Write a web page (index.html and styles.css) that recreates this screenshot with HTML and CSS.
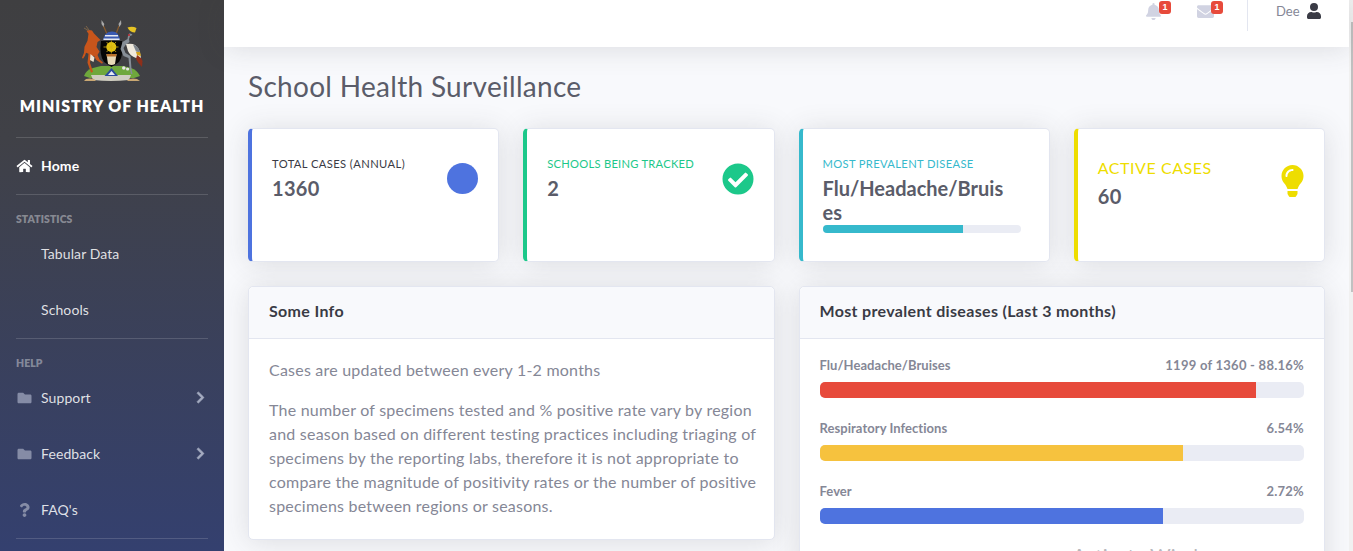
FILE: index.html
```html
<!DOCTYPE html>
<html lang="en">
<head>
<meta charset="utf-8">
<title>School Health Surveillance</title>
<link rel="stylesheet" href="styles.css">
</head>
<body>
<div class="app">
  <aside class="sidebar">
    <div class="brand">
      <svg class="crest" viewBox="0 0 62 62" width="62" height="62">
        <path d="M3 56q2-6 9-8l8-2h22l8 2q6 2 9 8l-6 2H9z" fill="#6fa83c"/>
        <path d="M10 55h40l-2 5q-18 2-36 0z" fill="#cfcdc0"/>
        <path d="M5 59q4-1 8 0l2 2H3zM48 59q4-1 8 0l3 2H46z" fill="#c9a772"/>
        <path d="M23.500 56l7-8 6.500 8z" fill="#2b4a9c"/>
        <path d="M27 55l3.500-4 3.500 4z" fill="#e8ecf4"/>
        <path d="M41 48a1.800 1.800 0 1 0 3.600 0a1.800 1.800 0 1 0-3.600 0zM45 49a1.600 1.600 0 1 0 3.200 0a1.600 1.600 0 1 0-3.200 0z" fill="#e6e6e6"/>
        <path d="M22.500 6l3.500 8M38 6l-3 8" stroke="#8a5a2a" stroke-width="1.200" fill="none"/>
        <path d="M20.500 0l2.800 4-.8 3-2-3zM40 0l.3 4-2 3-.8-3z" fill="#a8a8a8"/>
        <path d="M22 20q1-8 8.500-8.500T39 20z" fill="#3a59b0"/>
        <path d="M24 15h13v1.500H24zM22.500 18.500h16V20h-16z" fill="#e6e8f0"/>
        <path d="M20 21h21q2 14-3 21l-7.500 5-7.500-5q-5-7-3-21z" fill="#060606"/>
        <circle cx="30.300" cy="27" r="5" fill="#e3c414"/>
        <path d="M22.500 27h15M30.300 20.500v13M25.500 22l9.600 10M35 22l-9.400 10" stroke="#d6b212" stroke-width=".8"/>
        <path d="M25.500 34h10l-1.500 10q-3.500 2-7 0z" fill="#e7d9b8"/>
        <path d="M25.500 34h10l-.3 2.500h-9.400z" fill="#b9722c"/>
        <path d="M8 10l3 .5 2 3 4.500 4.500 2 2-3 2-1 5 3 4.500-2 3.500 2 4.500 3.500 3-1 1.200-6-4-2-4-3 1-1 6 3 9-2 1-3.500-10 1-9-2.500-1-1 3-2 3-1-1 2-5 .5-6 3-6 1-7-2-3z" fill="#c8551b"/>
        <path d="M8 10L5 6M7.500 10.500L3 8" stroke="#7d6448" stroke-width="1"/>
        <path d="M9.500 34l4 3.500-1 4.500-3.500-2z" fill="#efe2cf"/>
        <path d="M48 13.500q3-.5 3.500 1.500l-2.500 1-1 3 .5 3-4 3-2 3 2 5 5 3 1 13 1 5-1.500 0-1.500-6 -1-10-5-2-3-7 2-7 5-3 .5-3z" fill="#868e96"/>
        <path d="M45 24q6-1 9 1 4 3 5 8l1 5-5 0q-6-2-8-7z" fill="#efe9dc"/>
        <path d="M52 24.500q4 1 6 5l1 3-4-1z" fill="#7e858c"/>
        <path d="M55 32l4 0 1 4-4-1z" fill="#d2a11a"/>
        <path d="M56 35q4 2 5.500 6l-.5 6q-4-4-6-8z" fill="#8e2f1a"/>
        <path d="M46.500 7.500q5-1.500 9 .5l-1.500 4.500q-5 0-7.500-5z" fill="#e5c324"/>
        <circle cx="48" cy="15" r="1" fill="#c0272d"/>
      </svg>
      <div class="brand-name">MINISTRY OF HEALTH</div>
    </div>
    <hr class="divider">
    <a class="nav-item nav-home">
      <svg class="nav-icon home" viewBox="0 0 576 512" width="16" height="14"><path fill="#fff" d="M280 148 96 300v164a16 16 0 0 0 16 16l112-.3a16 16 0 0 0 16-16V368a16 16 0 0 1 16-16h64a16 16 0 0 1 16 16v95.600a16 16 0 0 0 16 16l112 .4a16 16 0 0 0 16-16V300L296 148a12 12 0 0 0-16 0zm292 103-84-69V44a12 12 0 0 0-12-12h-56a12 12 0 0 0-12 12v73l-89-74a48 48 0 0 0-61 0L4 251a12 12 0 0 0-2 17l26 31a12 12 0 0 0 17 2L280 107a12 12 0 0 1 16 0l235 194a12 12 0 0 0 17-2l26-31a12 12 0 0 0-2-17z"/></svg>
      <span>Home</span>
    </a>
    <hr class="divider">
    <div class="nav-heading">STATISTICS</div>
    <a class="nav-item"><span class="nav-blank"></span><span>Tabular Data</span></a>
    <a class="nav-item"><span class="nav-blank"></span><span>Schools</span></a>
    <hr class="divider">
    <div class="nav-heading">HELP</div>
    <a class="nav-item">
      <svg class="nav-icon" viewBox="0 0 512 512" width="15" height="14"><path fill="#858ca6" d="M464 128H272l-64-64H48C21.500 64 0 85.500 0 112v288c0 26.500 21.500 48 48 48h416c26.500 0 48-21.500 48-48V176c0-26.500-21.500-48-48-48z"/></svg>
      <span>Support</span>
      <svg class="chev" viewBox="0 0 320 512" width="9" height="13"><path fill="#a4abc0" stroke="#a4abc0" stroke-width="24" d="M285 273 91 467a24 24 0 0 1-34 0l-23-23a24 24 0 0 1 0-34l154-154L34 102a24 24 0 0 1 0-34l23-23a24 24 0 0 1 34 0l194 194a24 24 0 0 1 0 34z"/></svg>
    </a>
    <a class="nav-item">
      <svg class="nav-icon" viewBox="0 0 512 512" width="15" height="14"><path fill="#858ca6" d="M464 128H272l-64-64H48C21.500 64 0 85.500 0 112v288c0 26.500 21.500 48 48 48h416c26.500 0 48-21.500 48-48V176c0-26.500-21.500-48-48-48z"/></svg>
      <span>Feedback</span>
      <svg class="chev" viewBox="0 0 320 512" width="9" height="13"><path fill="#a4abc0" stroke="#a4abc0" stroke-width="24" d="M285 273 91 467a24 24 0 0 1-34 0l-23-23a24 24 0 0 1 0-34l154-154L34 102a24 24 0 0 1 0-34l23-23a24 24 0 0 1 34 0l194 194a24 24 0 0 1 0 34z"/></svg>
    </a>
    <a class="nav-item">
      <svg class="nav-icon" viewBox="0 0 384 512" width="15" height="14"><path fill="#858ca6" d="M202 0C122 0 70 33 29 91c-7 11-5 25 5 33l43 33c10 8 25 6 33-4 25-32 44-50 84-50 31 0 70 20 70 50 0 23-19 34-49 51-36 20-83 45-83 107v10c0 13 11 24 24 24h72c13 0 24-11 24-24v-6c0-43 125-45 125-161C377 67 286 0 202 0zm-10 373c-38 0-69 31-69 69s31 70 69 70 70-32 70-70-32-69-70-69z"/></svg>
      <span>FAQ's</span>
    </a>
    <hr class="divider">
  </aside>

  <div class="main">
    <header class="topbar">
      <div class="top-icon">
        <svg viewBox="0 0 448 512" width="15" height="17"><path fill="#d1d3e2" d="M224 512c35 0 64-29 64-64H160c0 35 29 64 64 64zm215-150c-19-21-55-52-55-154 0-78-54-140-128-155V32a32 32 0 1 0-64 0v21C118 68 64 130 64 208c0 102-36 133-55 154-6 6-9 14-9 22 0 16 13 32 32 32h384c19 0 32-16 32-32 0-8-3-16-9-22z"/></svg>
        <span class="badge">1</span>
      </div>
      <div class="top-icon mail">
        <svg viewBox="0 0 512 512" width="17" height="17"><path fill="#d1d3e2" d="M502 191c4-3 10 0 10 5v204c0 27-21 48-48 48H48c-26 0-48-21-48-48V196c0-5 6-8 10-5 22 17 52 39 154 113 21 15 57 48 92 48 36 0 72-33 92-48 102-74 132-96 154-113zM256 320c23 0 57-29 73-41 133-97 143-105 174-129 6-5 9-12 9-19v-19c0-27-21-48-48-48H48C21 64 0 85 0 112v19c0 7 3 14 9 19 31 24 41 32 174 129 16 12 50 41 73 41z"/></svg>
        <span class="badge">1</span>
      </div>
      <div class="top-sep"></div>
      <div class="user">
        <span class="user-name">Dee</span>
        <svg viewBox="0 0 448 512" width="14" height="16"><path fill="#3a3b45" d="M224 256a128 128 0 1 0 0-256 128 128 0 0 0 0 256zm90 32h-17a174 174 0 0 1-146 0h-17C60 288 0 348 0 422v42c0 27 21 48 48 48h352c27 0 48-21 48-48v-42c0-74-60-134-134-134z"/></svg>
      </div>
    </header>

    <main class="content">
      <h1 class="page-title">School Health Surveillance</h1>

      <section class="stats-row">
        <article class="stat stat-blue">
          <div class="stat-text">
            <div class="stat-label">TOTAL CASES (ANNUAL)</div>
            <div class="stat-value">1360</div>
          </div>
          <span class="dot"></span>
        </article>
        <article class="stat stat-green">
          <div class="stat-text">
            <div class="stat-label">SCHOOLS BEING TRACKED</div>
            <div class="stat-value">2</div>
          </div>
          <svg viewBox="0 0 512 512" width="32" height="32"><path fill="#1cc88a" d="M504 256a248 248 0 1 1-496 0 248 248 0 0 1 496 0zM227 387l184-184a16 16 0 0 0 0-23l-23-22a16 16 0 0 0-23 0L216 308l-70-70a16 16 0 0 0-23 0l-22 23a16 16 0 0 0 0 22l103 104a16 16 0 0 0 23 0z"/></svg>
        </article>
        <article class="stat stat-cyan">
          <div class="stat-text">
            <div class="stat-label">MOST PREVALENT DISEASE</div>
            <div class="stat-value">Flu/Headache/Bruis<br>es</div>
            <div class="mini-track"><div class="mini-fill"></div></div>
          </div>
        </article>
        <article class="stat stat-yellow">
          <div class="stat-text">
            <div class="stat-label">ACTIVE CASES</div>
            <div class="stat-value">60</div>
          </div>
          <svg class="bulb" viewBox="0 0 352 512" width="23" height="32"><path fill="#eedd00" d="M96 454c0 6 2 12 5 18l17 26c5 8 16 14 26 14h64c10 0 21-6 26-14l17-26c3-5 5-12 5-18v-38H96zM176 0C74 0 0 82 0 176c0 44 16 85 43 116 17 19 43 59 53 92h160c10-33 36-73 53-92 27-31 43-72 43-116C352 79 273 0 176 0zm0 96c-44 0-80 36-80 80 0 9-7 16-16 16s-16-7-16-16c0-62 50-112 112-112 9 0 16 7 16 16s-7 16-16 16z"/></svg>
        </article>
      </section>

      <section class="panels">
        <article class="panel">
          <h2 class="panel-head">Some Info</h2>
          <div class="panel-body">
            <p>Cases are updated between every 1-2 months</p>
            <p>The number of specimens tested and % positive rate vary by region and season based on different testing practices including triaging of specimens by the reporting labs, therefore it is not appropriate to compare the magnitude of positivity rates or the number of positive specimens between regions or seasons.</p>
          </div>
        </article>
        <article class="panel">
          <h2 class="panel-head">Most prevalent diseases (Last 3 months)</h2>
          <div class="panel-body bars">
            <div class="bar-row"><div class="bar-label"><span>Flu/Headache/Bruises</span><span class="bar-value">1199 of 1360 - 88.16%</span></div><div class="track"><div class="fill red" style="width:90%"></div></div></div>
            <div class="bar-row"><div class="bar-label"><span>Respiratory Infections</span><span class="bar-value">6.54%</span></div><div class="track"><div class="fill amber" style="width:75%"></div></div></div>
            <div class="bar-row"><div class="bar-label"><span>Fever</span><span class="bar-value">2.72%</span></div><div class="track"><div class="fill blue" style="width:70.800%"></div></div></div>
            <div class="watermark">Activate Windows</div>
          </div>
        </article>
      </section>
    </main>
  </div>
  <div class="scrollbar"><div class="scroll-thumb"></div></div>
</div>
</body>
</html>
```
FILE: styles.css
```css
* { box-sizing: border-box; }
html, body { margin: 0; height: 551px; overflow: hidden; }
body { font-family: "Lato", "Open Sans", "Noto Sans", sans-serif; font-size: 16px; color: #858796; background: #f8f9fc; }
.app { display: flex; height: 551px; overflow: hidden; }

.sidebar { width: 224px; flex: none; height: 551px; padding: 0 16px; color: #fff;
  background: linear-gradient(180deg, #3f3f41 0%, #404147 25%, #34406f 100%); }
.brand { height: 137px; display: flex; flex-direction: column; align-items: center; padding-top: 20px; margin: 0 -16px; }
.crest { display: block; }
.brand-name { margin-top: 14px; font-size: 16px; line-height: 20px; font-weight: 800; letter-spacing: .95px; white-space: nowrap; }
.divider { margin: 0; border: 0; border-top: 1px solid rgba(255,255,255,.15); }
.nav-item { display: flex; align-items: center; height: 56px; padding-bottom: 1px; font-size: 14px; letter-spacing: .1px; color: rgba(255,255,255,.85); }
.nav-home { color: #fff; font-weight: 700; }
.nav-icon { flex: none; width: 17px; margin-right: 8px; }
.nav-blank { width: 25px; flex: none; }
.chev { margin-left: auto; margin-right: 3px; }
.nav-heading { height: 31px; padding-top: 17px; font-size: 10.400px; font-weight: 800; line-height: 14px; color: rgba(255,255,255,.4); letter-spacing: .1px; }

.main { flex: 1; min-width: 0; display: flex; flex-direction: column; background: #f8f9fc; }
.scrollbar { width: 4px; flex: none; background: #f1f1f1; padding: 22px 0 0 2px; }
.scroll-thumb { width: 2px; height: 270px; background: #c1c1c1; }
.topbar { height: 47px; flex: none; display: flex; justify-content: flex-end; align-items: flex-start; background: #fff; box-shadow: 0 2px 28px rgba(58,59,69,.15); padding-right: 16px; position: relative; z-index: 2; }
.top-icon { position: relative; width: 15px; margin-right: 36px; padding-top: 3px; height: 30px; }
.top-icon.mail { width: 17px; margin-right: 33px; }
.badge { position: absolute; top: 1px; left: 13px; width: 12px; height: 13px; border-radius: 3px; background: #e74a3b; color: #fff; font-size: 9px; font-weight: 800; line-height: 13px; text-align: center; font-family: "Liberation Sans", sans-serif; }
.mail .badge { left: 14px; }
.top-sep { width: 1px; height: 31px; background: #e3e6f0; }
.user { display: flex; align-items: flex-start; width: 57px; margin-left: 28px; padding-top: 3px; gap: 7px; }
.user-name { font-size: 13px; line-height: 17px; color: #858796; }

.content { flex: 1; padding: 0 24px; }
.page-title { margin: 0; padding-top: 22px; height: 81px; font-size: 28px; line-height: 34px; font-weight: 400; color: #5a5c69; letter-spacing: .3px; }
.stats-row { display: grid; grid-template-columns: repeat(4, 1fr); gap: 24px; }
.stat { height: 134px; background: #fff; border: 1px solid #e3e6f0; border-radius: 5px; padding: 27px 20px 0 20px; display: flex; justify-content: space-between; align-items: flex-start; box-shadow: 0 2px 28px rgba(58,59,69,.15); }
.stat-blue { border-left: 4px solid #4e73df; }
.stat-green { border-left: 4px solid #1cc88a; }
.stat-cyan { border-left: 4px solid #36b9cc; padding-right: 28px; }
.stat-yellow { border-left: 4px solid #eedd00; padding-top: 28px; }
.stat-text { min-width: 0; flex: 1; }
.stat-label { font-size: 11.200px; line-height: 15px; color: #3a3b45; letter-spacing: .4px; }
.stat-green .stat-label { color: #1cc88a; letter-spacing: .25px; }
.stat-cyan .stat-label { color: #36b9cc; letter-spacing: .35px; }
.stat-yellow .stat-label { color: #eedd00; font-size: 16px; line-height: 22px; letter-spacing: .55px; }
.stat-value { font-size: 20px; line-height: 24px; font-weight: 700; color: #5a5c69; margin-top: 5px; letter-spacing: .3px; }
.stat-cyan .stat-value { letter-spacing: 0; }
.dot { width: 31px; height: 31px; margin-top: 7px; border-radius: 50%; background: #4e73df; flex: none; }
.stat svg { flex: none; margin-top: 7px; }
.stat svg.bulb { margin-top: 8px; }
.mini-track { height: 8px; border-radius: 4px; background: #eaecf4; overflow: hidden; margin-top: 1px; }
.mini-fill { width: 70.700%; height: 100%; background: #36b9cc; }

.panels { display: grid; grid-template-columns: 1fr 1fr; gap: 24px; margin-top: 24px; align-items: start; }
.panel { background: #fff; border: 1px solid #e3e6f0; border-radius: 5px; box-shadow: 0 2px 28px rgba(58,59,69,.15); }
.panel-head { margin: 0; height: 52px; padding: 0 20px; font-size: 16px; font-weight: 700; line-height: 47px; letter-spacing: .33px; color: #3a3b45; background: #f8f9fc; border-bottom: 1px solid #e3e6f0; border-radius: 5px 5px 0 0; }
.panel-body { padding: 19px 20px 21px; }
.panel-body p { margin: 0 -8px 16px 0; font-size: 16px; line-height: 24px; letter-spacing: .22px; color: #858796; }
.panel-body p:last-child { margin-bottom: 0; }
.bars { padding-top: 18px; }
.bar-row { margin-bottom: 22px; }
.bar-label { display: flex; justify-content: space-between; font-size: 13px; line-height: 17px; font-weight: 700; letter-spacing: .05px; color: #858796; margin-bottom: 8px; }
.bar-value { letter-spacing: .25px; }
.track { height: 16px; border-radius: 5px; background: #eaecf4; overflow: hidden; }
.fill { height: 100%; }
.red { background: #e74a3b; }
.amber { background: #f6c23e; }
.blue { background: #4e73df; }
.watermark { padding-left: 253px; margin-top: -3px; font-size: 20px; line-height: 24px; color: #b8b8bd; white-space: nowrap; }
```
